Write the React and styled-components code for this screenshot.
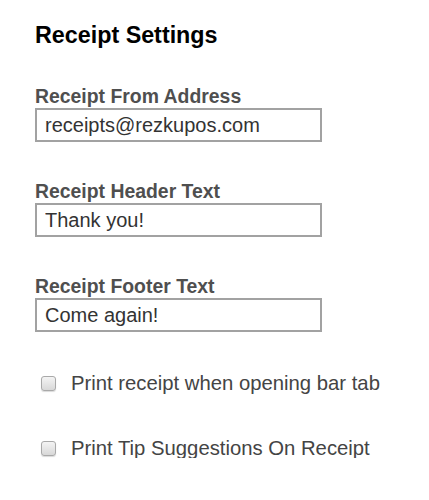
import React from 'react';
import styled, { createGlobalStyle } from 'styled-components';

const fields = [
  { id: 'from', label: 'Receipt From Address', value: 'receipts@rezkupos.com' },
  { id: 'header', label: 'Receipt Header Text', value: 'Thank you!' },
  { id: 'footer', label: 'Receipt Footer Text', value: 'Come again!' },
];

const options = [
  { id: 'print-tab', label: 'Print receipt when opening bar tab' },
  { id: 'print-tip', label: 'Print Tip Suggestions On Receipt' },
];

const App = () => {
  return (
    <>
      <GlobalStyle />
      <Page>
        <Title>Receipt Settings</Title>

        {fields.map((f) => (
          <Field key={f.id}>
            <Label htmlFor={f.id}>{f.label}</Label>
            <TextInput id={f.id} type="text" defaultValue={f.value} />
          </Field>
        ))}

        <Options>
          {options.map((o) => (
            <CheckRow key={o.id}>
              <Check id={o.id} type="checkbox" />
              <CheckLabel htmlFor={o.id}>{o.label}</CheckLabel>
            </CheckRow>
          ))}
        </Options>
      </Page>
    </>
  );
};

export default App;

const GlobalStyle = createGlobalStyle`
  body {
    margin: 0;
    background: #ffffff;
    font-family: "Liberation Sans", Arial, Helvetica, sans-serif;
  }
`;

const Page = styled.div`
  display: flex;
  flex-direction: column;
  gap: 40px;
  padding: 24px 0 0 35px;
`;

const Title = styled.h2`
  margin: 0;
  font-size: 23.3px;
  line-height: 23px;
  font-weight: 700;
  color: #000000;
`;

const Field = styled.div`
  display: flex;
  flex-direction: column;
  gap: 2px;
`;

const Label = styled.label`
  font-size: 19.4px;
  line-height: 19px;
  font-weight: 700;
  color: #4f4f4f;
`;

const TextInput = styled.input`
  box-sizing: border-box;
  width: 287px;
  height: 34px;
  border: 2px solid #a2a2a2;
  border-radius: 0;
  padding: 0 8px;
  margin: 0;
  font-family: "Liberation Sans", Arial, Helvetica, sans-serif;
  font-size: 20px;
  color: #333333;
  background: #ffffff;
  outline: none;
`;

const Options = styled.div`
  display: flex;
  flex-direction: column;
  gap: 45px;
  margin-top: 1px;
`;

const CheckRow = styled.div`
  display: flex;
  align-items: center;
  gap: 15px;
  height: 20px;
  padding-left: 6px;
`;

const Check = styled.input`
  appearance: none;
  -webkit-appearance: none;
  box-sizing: border-box;
  width: 15px;
  height: 15px;
  margin: 0;
  border: 1px solid #a9a9a9;
  border-radius: 3px;
  background: linear-gradient(#f4f4f4, #d8d8d8);
  box-shadow: 0 1px 1px rgba(0, 0, 0, 0.15);
  flex-shrink: 0;
`;

const CheckLabel = styled.label`
  font-size: 20.3px;
  line-height: 20px;
  color: #444444;
`;
